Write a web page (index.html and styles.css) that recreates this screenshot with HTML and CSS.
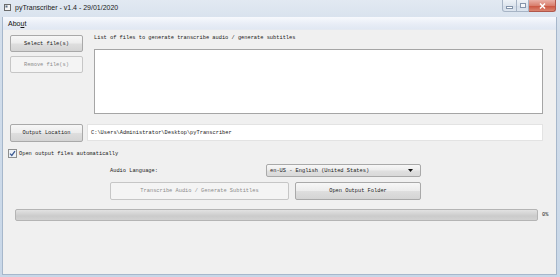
FILE: index.html
```html
<!DOCTYPE html>
<html>
<head>
<meta charset="utf-8">
<title>pyTranscriber</title>
<link rel="stylesheet" href="styles.css">
</head>
<body>
<div class="window">
  <div class="titlebar">
    <svg class="appicon" width="7" height="7" viewBox="0 0 7 7"><rect x="0.5" y="0.5" width="6" height="6" fill="#f4f4f4" stroke="#6b6b6b"/><rect x="1.5" y="1.5" width="2" height="2" fill="#5a6e86"/></svg>
    <span class="title">pyTranscriber - v1.4 - 29/01/2020</span>
    <div class="controls">
      <div class="ctl min"><span></span></div>
      <div class="ctl max"><span></span></div>
      <div class="ctl close"><svg width="7" height="6" viewBox="0 0 7 6"><path d="M1 0.5 L6 5.5 M6 0.5 L1 5.5" stroke="#fff" stroke-width="1.5"/></svg></div>
    </div>
  </div>
  <div class="frame">
    <div class="menubar"><span class="menu">Abo<u>u</u>t</span></div>
    <div class="client">
      <div class="row files">
        <div class="leftcol">
          <div class="btn">Select file(s)</div>
          <div class="btn disabled">Remove file(s)</div>
        </div>
        <div class="rightcol">
          <div class="label">List of files to generate transcribe audio / generate subtitles</div>
          <div class="list"></div>
        </div>
      </div>
      <div class="row output">
        <div class="btn outbtn">Output Location</div>
        <div class="input">C:\Users\Administrator\Desktop\pyTranscriber</div>
      </div>
      <div class="row check">
        <svg class="checkbox" width="9" height="9" viewBox="0 0 9 9"><rect x="0.5" y="0.5" width="8" height="8" fill="#eef2f7" stroke="#8e8f8f"/><path d="M2 4.6 L3.8 6.4 L7 2.2" fill="none" stroke="#3d5a93" stroke-width="1.3"/></svg>
        <span class="txt">Open output files automatically</span>
      </div>
      <div class="row lang">
        <span class="langlabel">Audio Language:</span>
        <div class="combo"><span>en-US - English (United States)</span><svg width="5" height="3" viewBox="0 0 5 3"><path d="M0 0 L5 0 L2.5 3 Z" fill="#111"/></svg></div>
      </div>
      <div class="row actions">
        <div class="btn disabled transcribe">Transcribe Audio / Generate Subtitles</div>
        <div class="btn openfolder">Open Output Folder</div>
      </div>
      <div class="row prog">
        <div class="progress"></div>
        <span class="pct">0%</span>
      </div>
    </div>
  </div>
</div>
</body>
</html>
```
FILE: styles.css
```css
html, body {
  margin: 0;
  padding: 0;
  width: 560px;
  height: 277px;
  overflow: hidden;
}
.window {
  width: 560px;
  height: 277px;
  display: flex;
  flex-direction: column;
  background: linear-gradient(#e2e9f2 0px, #d3deeb 30px, #c8d7e8 100%);
}
.titlebar {
  height: 17px;
  display: flex;
  align-items: flex-start;
  flex-shrink: 0;
}
.appicon {
  margin: 4px 0 0 4px;
}
.title {
  font-family: "Liberation Sans", Arial, sans-serif;
  font-size: 7px;
  line-height: 9px;
  margin: 3px 0 0 4px;
  color: #1a1a1a;
}
.controls {
  margin-left: auto;
  margin-right: 4px;
  display: flex;
  height: 12px;
}
.ctl {
  box-sizing: border-box;
  height: 12px;
  border: 1px solid #a7b4c5;
  border-top: none;
  display: flex;
  align-items: center;
  justify-content: center;
  background: linear-gradient(#eef2f7, #dee5ee 50%, #d3dce8 51%, #dde5ef);
}
.min {
  width: 15px;
  border-radius: 0 0 0 3px;
}
.min span {
  width: 5px;
  height: 1px;
  background: #fff;
  border: 1px solid #8494aa;
  margin-top: 3px;
}
.max {
  width: 12px;
  border-left: none;
}
.max span {
  width: 4px;
  height: 3px;
  border: 1px solid #8494aa;
  background: #f4f6f9;
}
.close {
  width: 27px;
  border-left: none;
  border-color: #b0574b;
  border-radius: 0 0 3px 0;
  background: linear-gradient(#eab1a8, #d9806f 50%, #c9513d 51%, #db8470);
}
.frame {
  flex: 1;
  display: flex;
  flex-direction: column;
  margin: 0 3px 2px 2px;
  border: 1px solid #a6b7cb;
  border-top: none;
}
.menubar {
  height: 12px;
  flex-shrink: 0;
  background: linear-gradient(#f7f9fd, #e8edf6 60%, #e1e8f3);
  border-bottom: 1px solid #e4e9f1;
  display: flex;
  align-items: center;
}
.menu {
  font-family: "Liberation Sans", Arial, sans-serif;
  font-size: 7px;
  color: #111;
  margin-left: 5px;
}
.client {
  flex: 1;
  background: #f0f0f0;
  font-family: "Liberation Mono", "DejaVu Sans Mono", monospace;
  font-size: 5.33px;
  color: #1a1a1a;
  display: flex;
  flex-direction: column;
}
.row {
  display: flex;
}
.btn {
  box-sizing: border-box;
  border: 1px solid #a9a9a9;
  border-radius: 2px;
  background: linear-gradient(#f7f7f7, #ececec 48%, #dedede 52%, #d4d4d4);
  display: flex;
  align-items: center;
  justify-content: center;
  color: #1a1a1a;
  white-space: nowrap;
}
.btn.disabled {
  background: #f4f4f4;
  border-color: #c6c6c6;
  color: #8c8c8c;
}
.files {
  margin-top: 5px;
  padding-left: 7px;
  align-items: flex-start;
}
.leftcol {
  width: 73px;
  display: flex;
  flex-direction: column;
  gap: 4px;
}
.leftcol .btn {
  height: 17px;
}
.rightcol {
  margin-left: 11px;
  margin-top: -1px;
}
.label {
  height: 8px;
  line-height: 8px;
  margin-bottom: 7px;
  white-space: nowrap;
}
.list {
  box-sizing: border-box;
  width: 449px;
  height: 65px;
  background: #fff;
  border: 1px solid #a5a5a5;
}
.output {
  margin-top: 10px;
  padding-left: 7px;
  align-items: flex-start;
}
.outbtn {
  width: 73px;
  height: 18px;
}
.input {
  box-sizing: border-box;
  margin-left: 4px;
  width: 456px;
  height: 17px;
  background: #fff;
  border: 1px solid #e3e3e3;
  display: flex;
  align-items: center;
  padding-left: 3px;
  white-space: nowrap;
}
.check {
  margin-top: 7px;
  padding-left: 5px;
  align-items: center;
  height: 9px;
}
.checkbox {
  display: block;
}
.txt {
  margin-left: 2px;
  white-space: nowrap;
}
.lang {
  margin-top: 6px;
  padding-left: 107px;
  align-items: center;
}
.langlabel {
  width: 156px;
  white-space: nowrap;
}
.combo {
  box-sizing: border-box;
  width: 155px;
  height: 13px;
  border: 1px solid #a9a9a9;
  border-radius: 2px;
  background: linear-gradient(#f7f7f7, #ececec 48%, #e0e0e0 52%, #d9d9d9);
  display: flex;
  align-items: center;
  justify-content: space-between;
  padding: 0 7px 0 3px;
  white-space: nowrap;
}
.actions {
  margin-top: 5px;
  padding-left: 107px;
  gap: 6px;
}
.actions .btn {
  height: 18px;
}
.transcribe {
  width: 179px;
}
.openfolder {
  width: 126px;
}
.prog {
  margin-top: 9px;
  padding-left: 12px;
  align-items: center;
}
.progress {
  box-sizing: border-box;
  width: 523px;
  height: 12px;
  border: 1px solid #b4b4b4;
  border-radius: 2px;
  background: linear-gradient(#e2e2e2, #d3d3d3 40%, #cbcbcb 60%, #d2d2d2);
}
.pct {
  margin-left: 4px;
}
```
